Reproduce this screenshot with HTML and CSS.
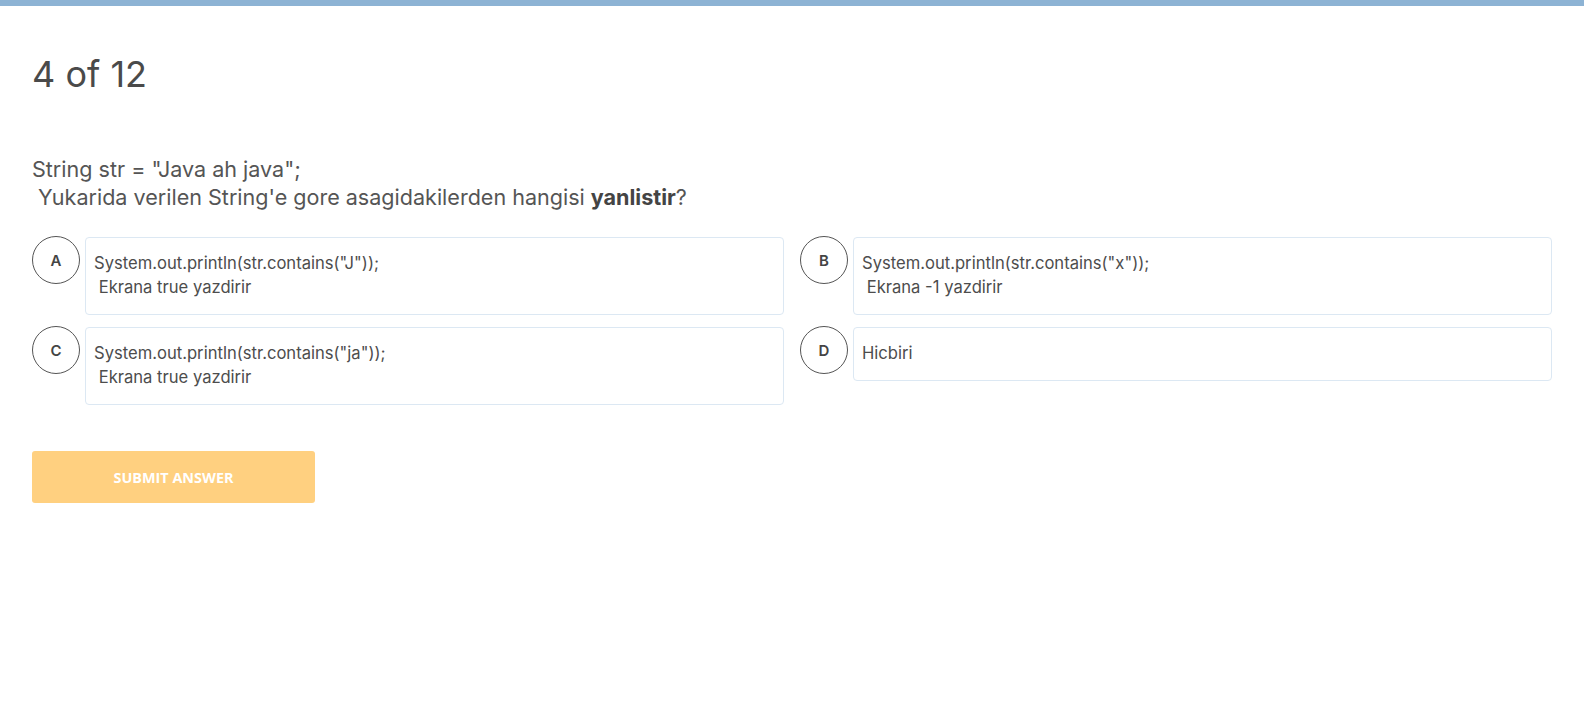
FILE: index.html
```html
<!DOCTYPE html>
<html>
<head>
<meta charset="utf-8">
<link rel="stylesheet" href="styles.css">
</head>
<body>
<div class="topbar"></div>
<main class="quiz">
  <h1 class="progress">4 of 12</h1>
  <div class="question">String str = "Java ah java";<br>&nbsp;Yukarida verilen String'e gore asagidakilerden hangisi <b>yanlistir</b>?</div>
  <div class="options">
    <div class="option">
      <div class="letter">A</div>
      <div class="answer">System.out.println(str.contains("J"));<br>&nbsp;Ekrana true yazdirir</div>
    </div>
    <div class="option">
      <div class="letter">B</div>
      <div class="answer">System.out.println(str.contains("x"));<br>&nbsp;Ekrana -1 yazdirir</div>
    </div>
    <div class="option">
      <div class="letter">C</div>
      <div class="answer">System.out.println(str.contains("ja"));<br>&nbsp;Ekrana true yazdirir</div>
    </div>
    <div class="option">
      <div class="letter">D</div>
      <div class="answer">Hicbiri</div>
    </div>
  </div>
  <button class="submit">SUBMIT ANSWER</button>
</main>
</body>
</html>
```
FILE: styles.css
```css
html, body {
  margin: 0;
  padding: 0;
  background: #ffffff;
}
body {
  font-family: Inter, "Noto Sans", sans-serif;
  color: #4d4d4d;
}
.topbar {
  height: 6px;
  background: #8db3d4;
}
.quiz {
  padding: 0 32px;
}
.progress {
  margin: 46px 0 0 0;
  font-size: 36px;
  line-height: 44px;
  font-weight: 400;
  color: #4a4a4a;
}
.question {
  margin-top: 59px;
  font-size: 21.55px;
  line-height: 28px;
  color: #555555;
}
.question b {
  font-weight: 700;
  color: #444444;
}
.options {
  margin-top: 26px;
  display: grid;
  grid-template-columns: 1fr 1fr;
  column-gap: 16px;
  row-gap: 12px;
  align-items: start;
}
.option {
  display: flex;
  align-items: flex-start;
  gap: 5px;
}
.letter {
  flex: 0 0 auto;
  width: 46px;
  height: 46px;
  border: 1px solid #555555;
  border-radius: 50%;
  display: flex;
  align-items: center;
  justify-content: center;
  font-size: 15px;
  font-weight: 600;
  color: #444444;
  margin-top: -1px;
}
.answer {
  flex: 1 1 auto;
  border: 1px solid #dce8f3;
  border-radius: 4px;
  padding: 13px 9px 15px 8px;
  font-size: 16.6px;
  line-height: 24px;
  color: #4d4d4d;
}
.submit {
  margin-top: 46px;
  width: 283px;
  height: 52px;
  border: none;
  border-radius: 3px;
  background: #ffd080;
  color: #ffffff;
  font-family: "Open Sans", sans-serif;
  font-weight: 700;
  font-size: 14.4px;
  cursor: pointer;
  display: block;
}
```
